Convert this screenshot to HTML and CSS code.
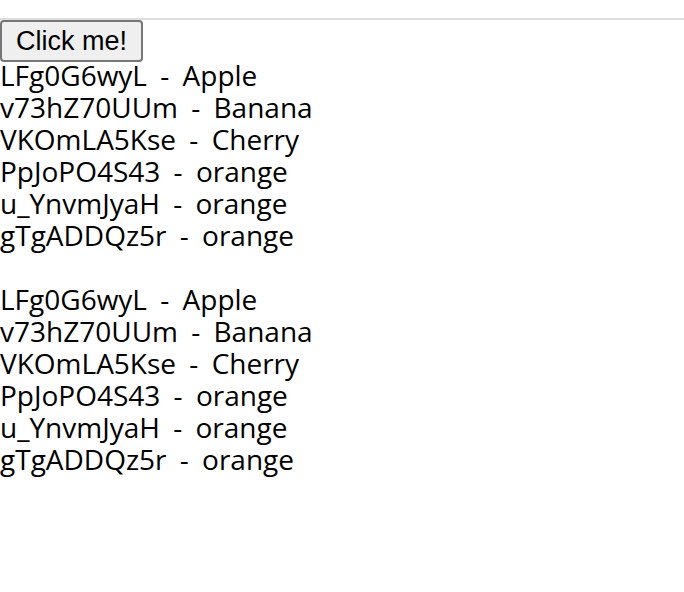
FILE: index.html
```html
<!DOCTYPE html>
<html lang="ko">
<head>
    <meta charset="UTF-8">
    <title>Fruits</title>
    <link rel="stylesheet" href="styles.css">
</head>
<body>
    <hr class="divider">
    <button class="btn">Click me!</button>

    <div class="list">
        <div>LFg0G6wyL - Apple</div>
        <div>v73hZ70UUm - Banana</div>
        <div>VKOmLA5Kse - Cherry</div>
        <div>PpJoPO4S43 - orange</div>
        <div>u_YnvmJyaH - orange</div>
        <div>gTgADDQz5r - orange</div>
    </div>

    <div class="list">
        <div>LFg0G6wyL - Apple</div>
        <div>v73hZ70UUm - Banana</div>
        <div>VKOmLA5Kse - Cherry</div>
        <div>PpJoPO4S43 - orange</div>
        <div>u_YnvmJyaH - orange</div>
        <div>gTgADDQz5r - orange</div>
    </div>
</body>
</html>
```
FILE: styles.css
```css
body {
    margin: 0;
    padding: 0;
    font-family: "Open Sans", "Noto Sans CJK KR", sans-serif;
    font-size: 28px;
    line-height: 32px;
    word-spacing: 6px;
    color: #000;
}

.divider {
    margin: 18px 0 0;
    border: none;
    border-top: 2px solid #ddd;
}

/* botão padrão, um pouco maior */
.btn {
    display: block;
    height: 42px;
    margin-bottom: -3px;
    padding: 0 14px;
    font-family: "Liberation Sans", Arial, sans-serif;
    font-size: 27px;
    word-spacing: normal;
    color: #000;
    background-color: #efefef;
    border: 2px solid #767676;
    border-radius: 4px;
}

.list {
    margin-bottom: 32px;
}
```
